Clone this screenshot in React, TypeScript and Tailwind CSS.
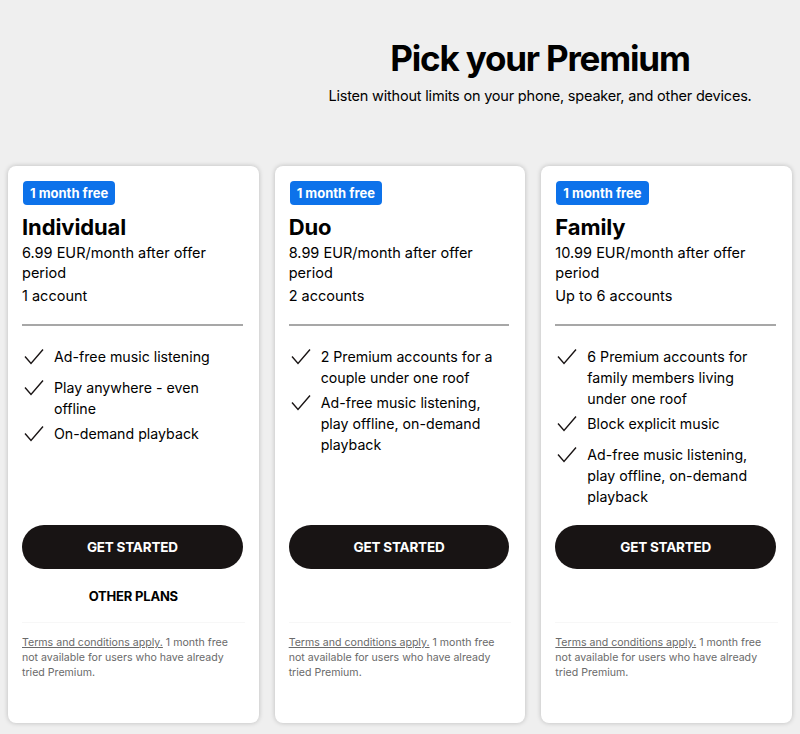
import React from "react";

type Plan = {
  name: string;
  price: string;
  accounts: string;
  features: string[];
  other?: boolean;
};

const plans: Plan[] = [
  {
    name: "Individual",
    price: "6.99 EUR/month after offer period",
    accounts: "1 account",
    features: ["Ad-free music listening", "Play anywhere - even offline", "On-demand playback"],
    other: true,
  },
  {
    name: "Duo",
    price: "8.99 EUR/month after offer period",
    accounts: "2 accounts",
    features: ["2 Premium accounts for a couple under one roof", "Ad-free music listening, play offline, on-demand playback"],
  },
  {
    name: "Family",
    price: "10.99 EUR/month after offer period",
    accounts: "Up to 6 accounts",
    features: [
      "6 Premium accounts for family members living under one roof",
      "Block explicit music",
      "Ad-free music listening, play offline, on-demand playback",
    ],
  },
];

function Check() {
  return (
    <svg width="24" height="21" viewBox="0 0 24 21" className="shrink-0" fill="none">
      <path d="M3 10.5 L9 17.5 L21 3.5" stroke="#191414" strokeWidth="1.4" strokeLinejoin="miter" />
    </svg>
  );
}

function Card({ plan }: { plan: Plan }) {
  return (
    <div className="flex h-[557px] flex-col rounded-lg bg-white px-[14px] pt-[15px] shadow-[0_0_5px_rgba(0,0,0,0.22)]">
      <div className="ml-px self-start rounded-[4px] bg-[#0d72ea] px-[7px] text-[13px] font-bold leading-6 text-white">
        1 month free
      </div>
      <h2 className="mt-2 text-[22px] font-bold leading-7 tracking-[-0.1px] text-[#000]">{plan.name}</h2>
      <p className="mt-[2px] text-[14.5px] leading-5 text-[#000]">{plan.price}</p>
      <p className="mt-[3px] text-[14.5px] leading-5 text-[#000]">{plan.accounts}</p>
      <div className="mr-[2px] mt-[18px] h-[2px] bg-[#a7a7a7]" />
      <ul className="mt-5 flex flex-1 flex-col gap-1 pr-2">
        {plan.features.map((f) => (
          <li key={f} className="flex min-h-[27px] items-start gap-2 text-[14.2px] leading-[21px] text-[#000]">
            <Check />
            <span>{f}</span>
          </li>
        ))}
      </ul>
      <button className="mr-[2px] h-11 rounded-full bg-[#181414] text-[13.5px] font-bold tracking-[-0.2px] text-white">
        GET STARTED
      </button>
      <div className="flex h-[54px] items-center justify-center border-b border-[#f7f7f7] pt-[3px]">
        {plan.other && <span className="text-[13px] font-bold tracking-[-0.2px] text-[#000]">OTHER PLANS</span>}
      </div>
      <p className="mt-3 pb-[43px] text-[10.6px] leading-[15px] text-[#6a6a6a]">
        <span className="underline">Terms and conditions apply.</span> 1 month free not available for users who have
        already tried Premium.
      </p>
    </div>
  );
}

export default function App() {
  return (
    <div className="min-h-[734px] bg-[#efefef] font-['Inter',sans-serif]">
      <div className="pl-[280px] pt-[38px] text-center">
        <h1 className="text-[35px] font-bold leading-10 tracking-[-1.2px] text-[#000]">Pick your Premium</h1>
        <p className="mt-2 text-[14.5px] leading-5 tracking-[-0.2px] text-[#000]">
          Listen without limits on your phone, speaker, and other devices.
        </p>
      </div>
      <div className="mt-[60px] grid grid-cols-3 gap-4 px-2">
        {plans.map((p) => (
          <Card key={p.name} plan={p} />
        ))}
      </div>
    </div>
  );
}
